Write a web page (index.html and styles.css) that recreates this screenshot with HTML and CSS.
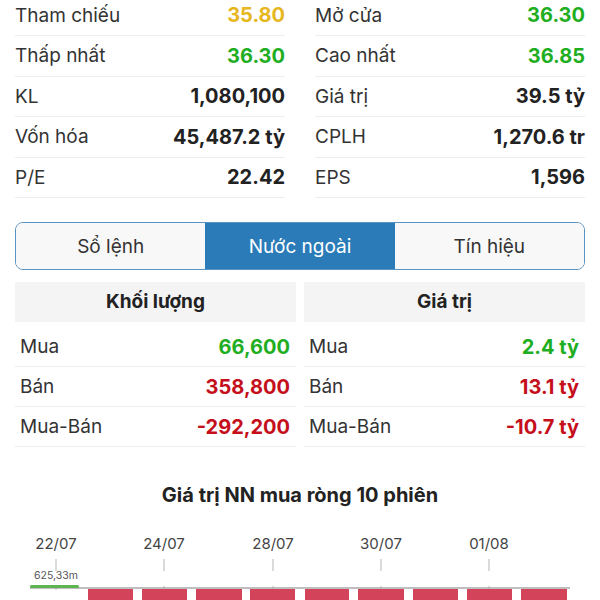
FILE: index.html
```html
<!DOCTYPE html>
<html lang="vi">
<head>
    <meta charset="UTF-8">
    <meta name="viewport" content="width=device-width, initial-scale=1.0">
    <title>Thông tin cổ phiếu</title>
    <link rel="stylesheet" href="styles.css">
</head>
<body>
    <div class="stats">
        <div class="stat-col">
            <div class="stat-row"><span class="label">Tham chiếu</span><span class="value ref">35.80</span></div>
            <div class="stat-row"><span class="label">Thấp nhất</span><span class="value up">36.30</span></div>
            <div class="stat-row"><span class="label">KL</span><span class="value">1,080,100</span></div>
            <div class="stat-row"><span class="label">Vốn hóa</span><span class="value">45,487.2 tỷ</span></div>
            <div class="stat-row"><span class="label">P/E</span><span class="value">22.42</span></div>
        </div>
        <div class="stat-col">
            <div class="stat-row"><span class="label">Mở cửa</span><span class="value up">36.30</span></div>
            <div class="stat-row"><span class="label">Cao nhất</span><span class="value up">36.85</span></div>
            <div class="stat-row"><span class="label">Giá trị</span><span class="value">39.5 tỷ</span></div>
            <div class="stat-row"><span class="label">CPLH</span><span class="value">1,270.6 tr</span></div>
            <div class="stat-row"><span class="label">EPS</span><span class="value">1,596</span></div>
        </div>
    </div>

    <div class="tabs">
        <button class="tab">Sổ lệnh</button>
        <button class="tab active">Nước ngoài</button>
        <button class="tab">Tín hiệu</button>
    </div>

    <div class="foreign">
        <div class="foreign-col">
            <div class="foreign-head">Khối lượng</div>
            <div class="foreign-row"><span class="label">Mua</span><span class="value up">66,600</span></div>
            <div class="foreign-row"><span class="label">Bán</span><span class="value down">358,800</span></div>
            <div class="foreign-row"><span class="label">Mua-Bán</span><span class="value down">-292,200</span></div>
        </div>
        <div class="foreign-col">
            <div class="foreign-head">Giá trị</div>
            <div class="foreign-row"><span class="label">Mua</span><span class="value up">2.4 tỷ</span></div>
            <div class="foreign-row"><span class="label">Bán</span><span class="value down">13.1 tỷ</span></div>
            <div class="foreign-row"><span class="label">Mua-Bán</span><span class="value down">-10.7 tỷ</span></div>
        </div>
    </div>

    <h2 class="chart-title">Giá trị NN mua ròng 10 phiên</h2>

    <svg class="chart" width="600" height="100" viewBox="0 0 600 100">
        <g class="ticks">
            <line x1="56" y1="51" x2="56" y2="82"/>
            <line x1="164" y1="51" x2="164" y2="82"/>
            <line x1="273" y1="51" x2="273" y2="82"/>
            <line x1="381" y1="51" x2="381" y2="82"/>
            <line x1="489" y1="51" x2="489" y2="82"/>
        </g>
        <g class="tick-labels">
            <text x="56" y="41">22/07</text>
            <text x="164" y="41">24/07</text>
            <text x="273" y="41">28/07</text>
            <text x="381" y="41">30/07</text>
            <text x="489" y="41">01/08</text>
        </g>
        <text class="bar-label" x="56" y="71">625,33m</text>
        <line class="axis" x1="30" y1="80" x2="570" y2="80"/>
        <rect class="bar-up" x="30" y="77" width="49" height="3" rx="1.5"/>
        <g class="bar-down">
            <rect x="88" y="81" width="45" height="30"/>
            <rect x="142" y="81" width="45" height="30"/>
            <rect x="196" y="81" width="46" height="30"/>
            <rect x="250" y="81" width="45" height="30"/>
            <rect x="305" y="81" width="44" height="30"/>
            <rect x="358" y="81" width="46" height="30"/>
            <rect x="413" y="81" width="45" height="30"/>
            <rect x="467" y="81" width="45" height="30"/>
            <rect x="521" y="81" width="46" height="30"/>
        </g>
    </svg>
</body>
</html>
```

FILE: styles.css
```css
body {
    font-family: 'Inter', 'Liberation Sans', sans-serif;
    margin: 0;
    width: 600px;
    height: 600px;
    overflow: hidden;
    background-color: #fff;
    color: #2b2b2b;
}
.stats {
    display: grid;
    grid-template-columns: 270px 270px;
    gap: 30px;
    padding: 0 15px;
    margin-top: -4.5px;
}
.stat-row {
    display: flex;
    justify-content: space-between;
    align-items: center;
    height: 40.5px;
    box-sizing: border-box;
    border-bottom: 1px solid #ededed;
    font-size: 19px;
}
.label {
    color: #333;
}
.value {
    font-size: 20px;
    font-weight: 700;
    color: #222;
}
.value.ref {
    color: #e6b71e;
}
.value.up {
    color: #1fae1f;
}
.value.down {
    color: #c5101c;
}
.tabs {
    display: flex;
    margin: 24px 15px 0;
    height: 48px;
    box-sizing: border-box;
    border: 1.5px solid #5a93c2;
    border-radius: 8px;
    overflow: hidden;
}
.tab {
    flex: 1;
    border: none;
    background-color: #f8f8f8;
    font-family: inherit;
    font-size: 19px;
    color: #333;
    padding: 0;
}
.tab.active {
    background-color: #2a7bb8;
    color: #fff;
}
.foreign {
    display: grid;
    grid-template-columns: 281px 281px;
    gap: 8px;
    padding: 0 15px;
    margin-top: 12px;
}
.foreign-head {
    height: 40px;
    line-height: 40px;
    text-align: center;
    background-color: #f4f4f4;
    font-size: 19px;
    font-weight: 700;
    color: #222;
    margin-bottom: 5px;
}
.foreign-row {
    display: flex;
    justify-content: space-between;
    align-items: center;
    height: 40px;
    box-sizing: border-box;
    border-bottom: 1px solid #ededed;
    padding: 0 6px 0 5px;
    font-size: 19px;
}
.foreign-row:first-of-type {
    height: 39px;
}
.chart-title {
    margin: 35px 0 0;
    height: 27px;
    line-height: 27px;
    text-align: center;
    font-size: 20px;
    font-weight: 700;
    color: #222;
}
.chart {
    display: block;
    margin-top: -1px;
    overflow: visible;
}
.ticks line {
    stroke: #b5b5b5;
    stroke-width: 1;
    stroke-dasharray: 12 15;
}
.tick-labels text {
    font-size: 15px;
    fill: #444;
    text-anchor: middle;
}
.bar-label {
    font-size: 10.5px;
    fill: #555;
    text-anchor: middle;
}
.axis {
    stroke: #a9a9a9;
    stroke-width: 1.5;
}
.bar-up {
    fill: #5cb54e;
}
.bar-down rect {
    fill: #d3435a;
}
```
